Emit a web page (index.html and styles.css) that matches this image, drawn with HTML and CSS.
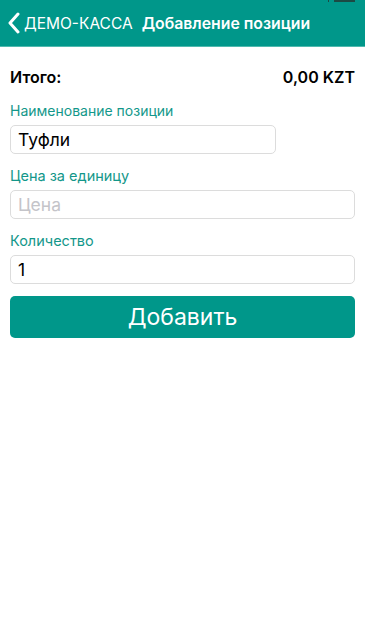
FILE: index.html
```html
<!DOCTYPE html>
<html lang="ru">
<head>
  <meta charset="UTF-8">
  <meta name="viewport" content="width=device-width, initial-scale=1.0">
  <title>Добавление позиции</title>
  <link rel="stylesheet" href="styles.css">
</head>
<body>
  <div class="status"><span class="sig"></span><span class="bat"></span></div>
  <div class="navbar">
    <div class="back">
      <svg width="12" height="22" viewBox="0 0 12 22"><path d="M10 2 L2 11 L10 20" fill="none" stroke="#fff" stroke-width="3" stroke-linecap="round" stroke-linejoin="round"/></svg>
      <span>ДЕМО-КАССА</span>
    </div>
    <div class="title">Добавление позиции</div>
  </div>

  <div class="form">
    <div class="total">
      <span>Итого:</span>
      <span>0,00 KZT</span>
    </div>

    <label class="label">Наименование позиции</label>
    <div class="field short">Туфли</div>

    <label class="label">Цена за единицу</label>
    <div class="field placeholder">Цена</div>

    <label class="label">Количество</label>
    <div class="field">1</div>

    <button class="add">Добавить</button>
  </div>
</body>
</html>
```

FILE: styles.css
```css
body {
  margin: 0;
  background: #fff;
  font-family: 'Inter', 'Noto Sans', sans-serif;
  color: #000;
  position: relative;
}
.status {
  position: absolute;
  top: 0;
  right: 10px;
  display: flex;
  gap: 5px;
}
.sig {
  width: 1px;
  height: 2px;
  background: #1c4a44;
}
.bat {
  width: 21px;
  height: 2px;
  background: #1c4a44;
}
.navbar {
  height: 46px;
  background-color: #00978a;
  border-bottom: 1px solid #4fb9ae;
  display: flex;
  align-items: center;
  padding: 0 8px;
  color: #fff;
}
.back {
  display: flex;
  align-items: center;
  gap: 4px;
  font-size: 15.5px;
  margin-right: 9px;
}
.title {
  font-size: 15.8px;
  font-weight: 600;
}
.form {
  padding: 0 10px;
  display: flex;
  flex-direction: column;
}
.total {
  display: flex;
  justify-content: space-between;
  font-size: 16px;
  font-weight: 600;
  margin-top: 19px;
  height: 22px;
  align-items: center;
}
.label {
  color: #13978a;
  font-size: 14.5px;
  margin-top: 12px;
  height: 20px;
  line-height: 20px;
}
.total + .label {
  margin-top: 13px;
  font-size: 14px;
}
.field {
  margin-top: 4px;
  height: 27px;
  border: 1px solid #dcdcdc;
  border-radius: 5px;
  padding: 0 7px;
  font-size: 17.5px;
  line-height: 27px;
}
.field.short {
  width: 250px;
}
.field.placeholder {
  color: #c4c4c9;
}
.add {
  margin-top: 12px;
  height: 42px;
  border: none;
  border-radius: 5px;
  background-color: #00978a;
  color: #fff;
  font-family: inherit;
  font-size: 23px;
  cursor: pointer;
}
```
